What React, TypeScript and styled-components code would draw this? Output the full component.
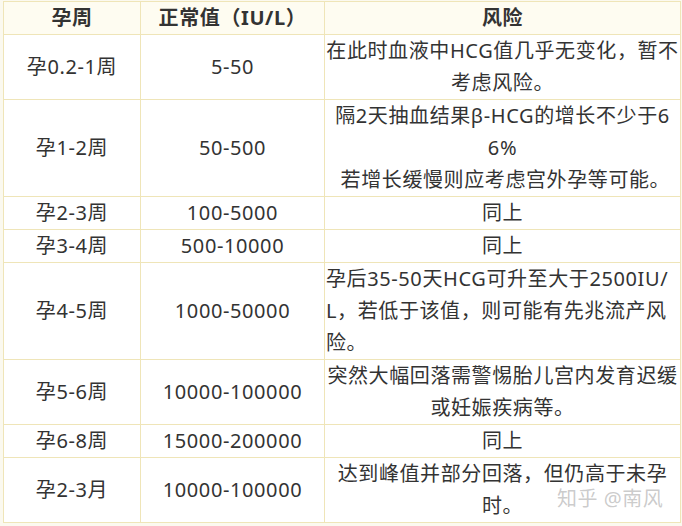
import styled, { createGlobalStyle } from "styled-components";

const GlobalStyle = createGlobalStyle`
  html, body {
    margin: 0;
    padding: 0;
    background: #fbf9ef;
  }
  body {
    font-family: "Noto Sans", "Noto Sans CJK SC", sans-serif;
    color: #333;
  }
`;

const Page = styled.div`
  position: relative;
  width: 682px;
  height: 526px;
  padding: 1px 0 0 3px;
  box-sizing: border-box;
`;

const Table = styled.table`
  border-collapse: collapse;
  table-layout: fixed;
  width: 674px;
  font-size: 20px;
  line-height: 32px;
  letter-spacing: 0.6px;
`;

const HeadCell = styled.th<{ $width: number }>`
  width: ${(p) => p.$width}px;
  height: 32px;
  padding: 0;
  border: 1px solid #efe5b8;
  background: #fefcf1;
  font-weight: 700;
  color: #333;
  text-align: center;
`;

const Cell = styled.td<{ $align?: "left" | "center" }>`
  padding: 0 1px;
  border: 1px solid #efe5b8;
  background: #fff;
  text-align: ${(p) => p.$align ?? "center"};
  vertical-align: middle;
  white-space: nowrap;
  overflow: hidden;
`;

const Line = styled.div`
  white-space: pre;
`;

const Watermark = styled.div`
  position: absolute;
  left: 557px;
  top: 487px;
  font-size: 20px;
  line-height: 24px;
  color: rgba(160, 160, 160, 0.55);
  letter-spacing: 0.5px;
`;

type Row = {
  week: string;
  value: string;
  risk: string[];
  align?: "left" | "center";
};

const rows: Row[] = [
  {
    week: "孕0.2-1周",
    value: "5-50",
    risk: ["在此时血液中HCG值几乎无变化，暂不", "考虑风险。"],
  },
  {
    week: "孕1-2周",
    value: "50-500",
    risk: ["隔2天抽血结果β-HCG的增长不少于6", "6%", " 若增长缓慢则应考虑宫外孕等可能。"],
  },
  { week: "孕2-3周", value: "100-5000", risk: ["同上"] },
  { week: "孕3-4周", value: "500-10000", risk: ["同上"] },
  {
    week: "孕4-5周",
    value: "1000-50000",
    risk: ["孕后35-50天HCG可升至大于2500IU/", "L，若低于该值，则可能有先兆流产风", "险。"],
    align: "left",
  },
  {
    week: "孕5-6周",
    value: "10000-100000",
    risk: ["突然大幅回落需警惕胎儿宫内发育迟缓", "或妊娠疾病等。"],
  },
  { week: "孕6-8周", value: "15000-200000", risk: ["同上"] },
  {
    week: "孕2-3月",
    value: "10000-100000",
    risk: ["达到峰值并部分回落，但仍高于未孕", "时。"],
  },
];

export default function App() {
  return (
    <Page>
      <GlobalStyle />
      <Table>
        <thead>
          <tr>
            <HeadCell $width={136}>孕周</HeadCell>
            <HeadCell $width={183}>正常值（IU/L）</HeadCell>
            <HeadCell $width={355}>风险</HeadCell>
          </tr>
        </thead>
        <tbody>
          {rows.map((row) => (
            <tr key={row.week + row.value}>
              <Cell>{row.week}</Cell>
              <Cell>{row.value}</Cell>
              <Cell $align={row.align}>
                {row.risk.map((line, i) => (
                  <Line key={i}>{line}</Line>
                ))}
              </Cell>
            </tr>
          ))}
        </tbody>
      </Table>
      <Watermark>知乎 @南风</Watermark>
    </Page>
  );
}
